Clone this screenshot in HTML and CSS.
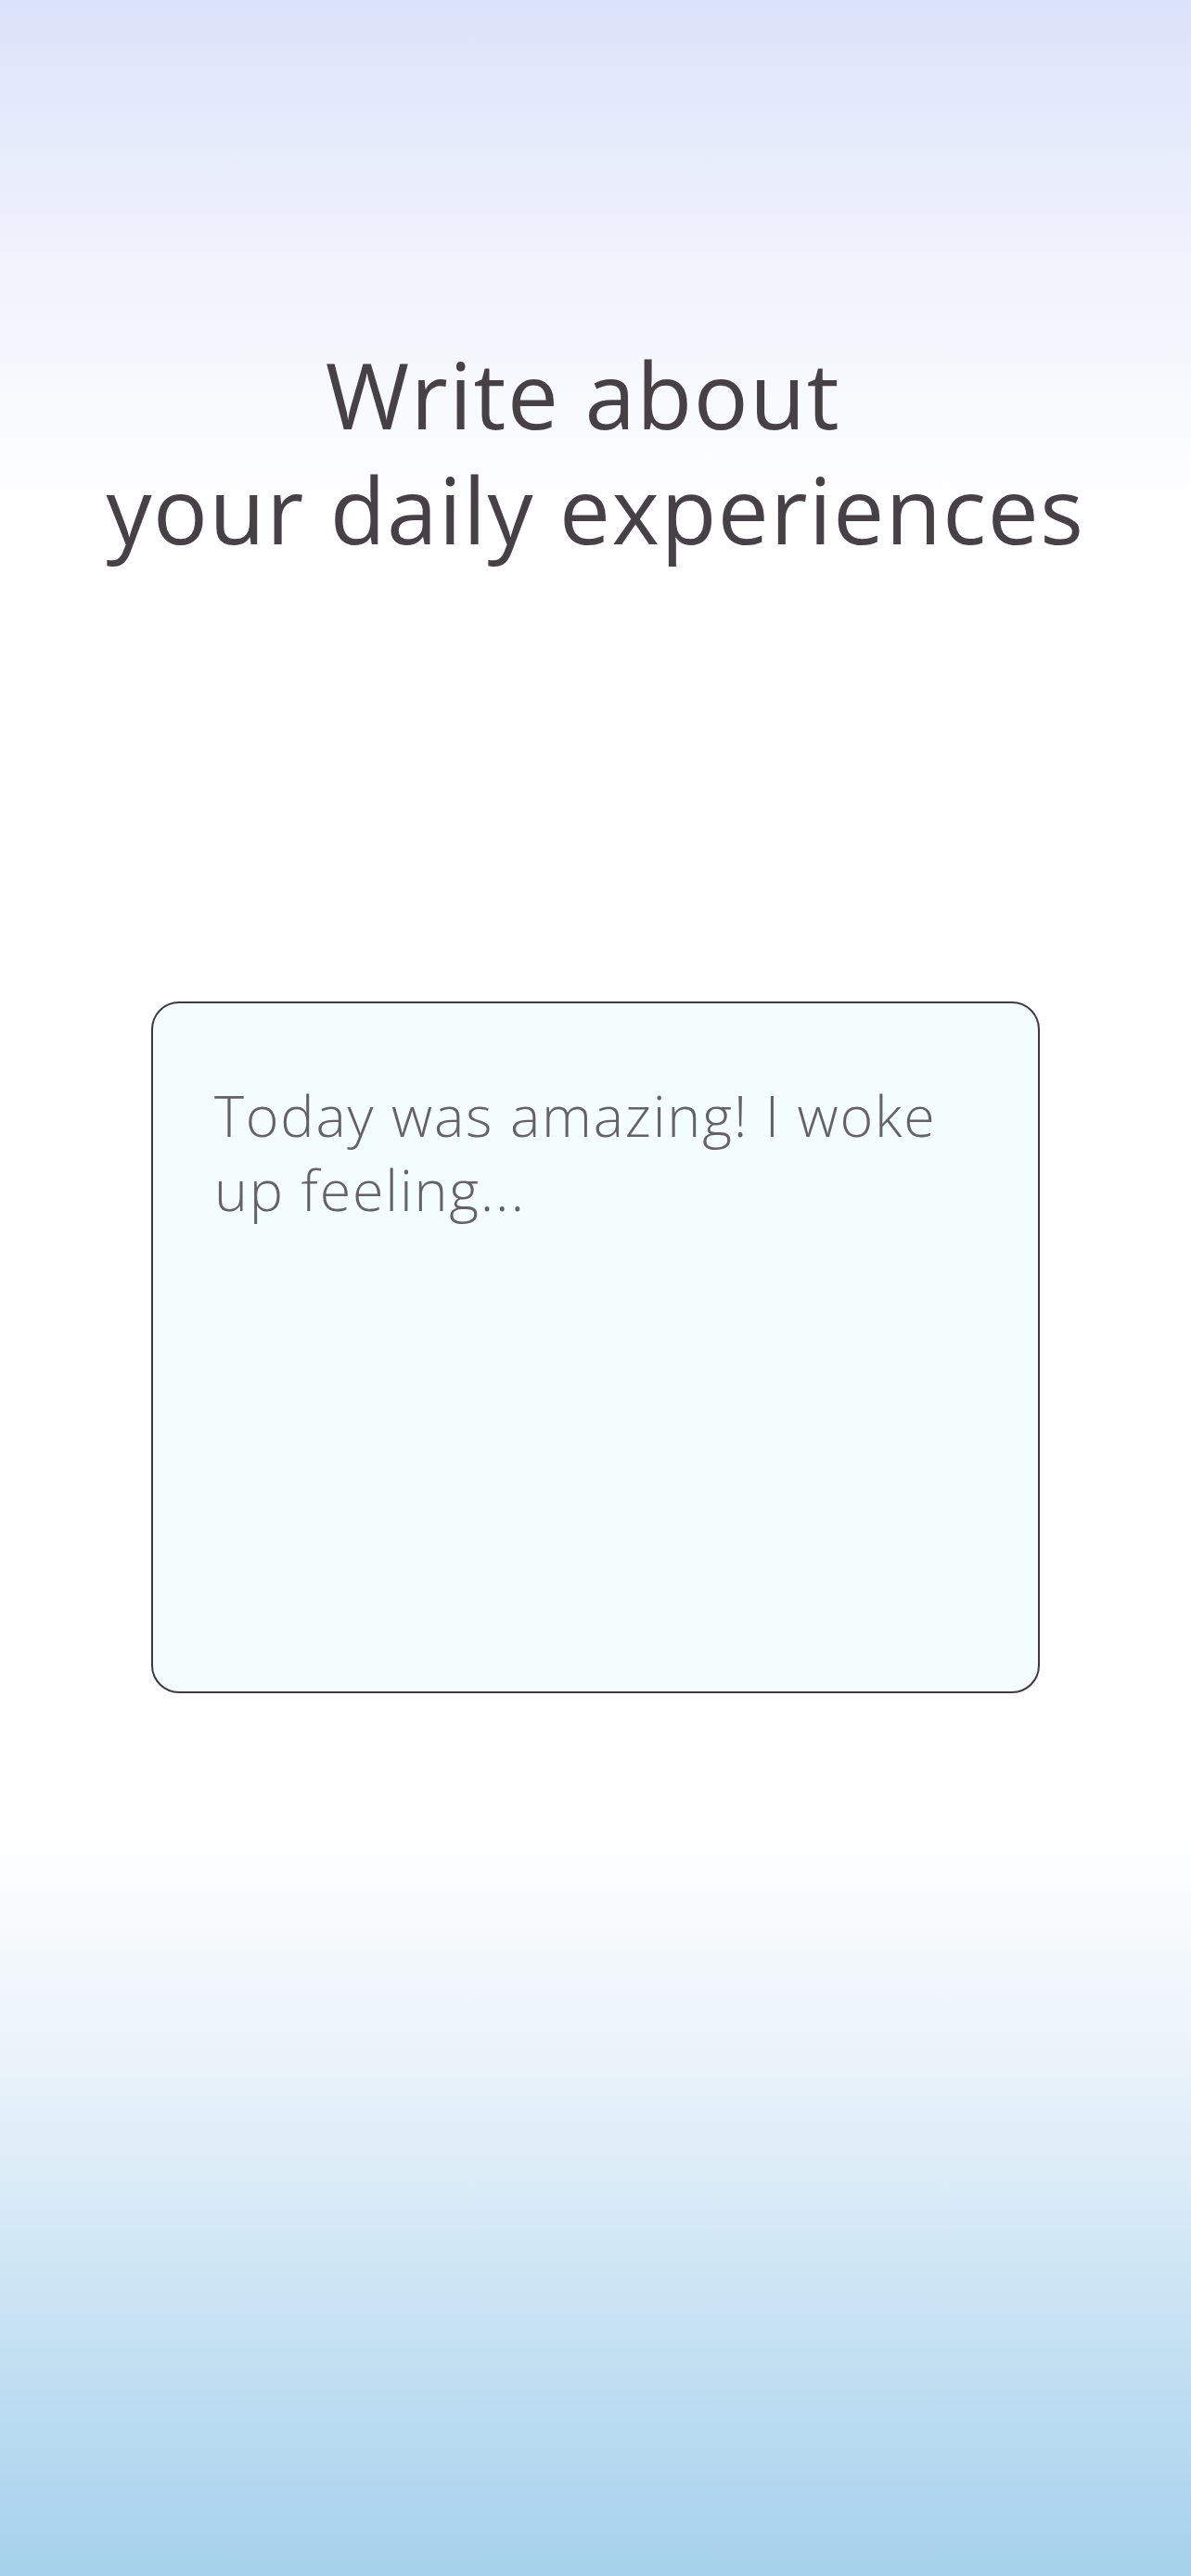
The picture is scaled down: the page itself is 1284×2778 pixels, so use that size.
FILE: index.html
```html
<!DOCTYPE html>
<html lang="en">
<head>
<meta charset="utf-8">
<title>Write about your daily experiences</title>
<link rel="stylesheet" href="styles.css">
</head>
<body>
<main class="screen">
  <h1 class="title">Write about&nbsp;<br>your daily experiences</h1>
  <section class="entry">
    <p class="entry-text">Today was amazing! I woke up feeling...</p>
  </section>
</main>
</body>
</html>
```

FILE: styles.css
```css
html, body {
  margin: 0;
  padding: 0;
}

body {
  font-family: "Open Sans", "Noto Sans", sans-serif;
}

.screen {
  box-sizing: border-box;
  width: 1284px;
  height: 2778px;
  display: flex;
  flex-direction: column;
  align-items: center;
  padding-top: 363px;
  background: linear-gradient(to bottom,
    #dbe3fa 0%,
    #eef1fc 9%,
    #ffffff 20%,
    #ffffff 71%,
    #eaf3fa 80%,
    #cbe4f4 89%,
    #a5d1ec 100%);
}

.title {
  margin: 0;
  font-size: 98px;
  line-height: 124px;
  font-weight: 500;
  color: #474145;
  text-align: center;
  letter-spacing: 1.5px;
}

.entry {
  box-sizing: border-box;
  margin-top: 469px;
  width: 958px;
  height: 746px;
  border: 2px solid #403a3e;
  border-radius: 30px;
  background: #f4fefd;
  padding: 81px 40px 0 66px;
}

.entry-text {
  margin: 0;
  font-size: 61px;
  line-height: 80px;
  font-weight: 300;
  letter-spacing: 1.8px;
  color: #656164;
}
```
